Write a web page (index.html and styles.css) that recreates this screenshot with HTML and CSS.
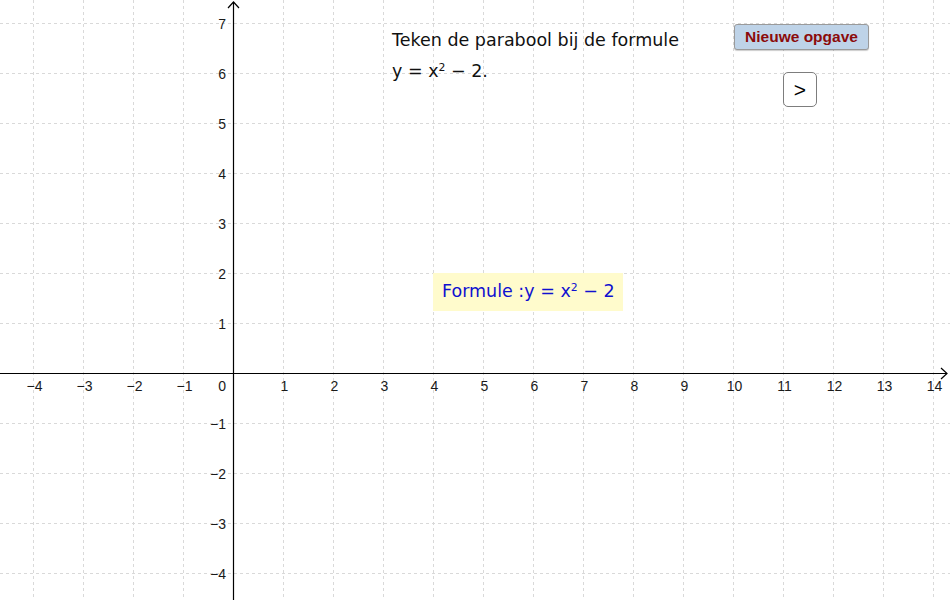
FILE: index.html
```html
<!DOCTYPE html>
<html lang="nl">
<head>
    <meta charset="UTF-8">
    <title>Parabool tekenen</title>
    <link rel="stylesheet" href="styles.css">
</head>
<body>
    <div class="applet">
        <svg class="graph" width="950" height="600" viewBox="0 0 950 600">
            <g id="grid" class="grid"></g>
            <g class="axes">
                <line x1="0" y1="373.5" x2="947" y2="373.5"/>
                <line x1="233.5" y1="2" x2="233.5" y2="600"/>
                <polyline points="941,368 947,373.5 941,379"/>
                <polyline points="228,8 233.5,2 239,8"/>
            </g>
            <g id="labels" class="labels"></g>
        </svg>

        <div class="opdracht">
            Teken de parabool bij de formule<br>
            y = x<sup>2</sup> &minus; 2.
        </div>

        <button class="nieuw">Nieuwe opgave</button>
        <button class="volgende">&gt;</button>

        <div class="formule">Formule :y = x<sup>2</sup> &minus; 2</div>
    </div>

    <script>
        // assenstelsel: oorsprong op (233.5, 373.5), 50px per eenheid
        const ox = 233.5, oy = 373.5, unit = 50;
        const ns = 'http://www.w3.org/2000/svg';
        const grid = document.getElementById('grid');
        const labels = document.getElementById('labels');

        const line = (x1, y1, x2, y2) => {
            const l = document.createElementNS(ns, 'line');
            l.setAttribute('x1', x1); l.setAttribute('y1', y1);
            l.setAttribute('x2', x2); l.setAttribute('y2', y2);
            grid.appendChild(l);
        };

        const label = (txt, x, y, anchor) => {
            const t = document.createElementNS(ns, 'text');
            t.setAttribute('x', x); t.setAttribute('y', y);
            t.setAttribute('text-anchor', anchor);
            t.textContent = txt;
            labels.appendChild(t);
        };

        for (let i = -4; i <= 14; i++) {
            const x = ox + i * unit;
            if (i !== 0) line(x, 0, x, 600);
            if (i < 0) label('\u2212' + (-i), x + 1, 391, 'middle');
            else if (i > 0) label(i, x + 1, 391, 'middle');
        }
        for (let j = -4; j <= 7; j++) {
            const y = oy - j * unit;
            if (j !== 0) {
                line(0, y, 950, y);
                label(j < 0 ? '\u2212' + (-j) : j, 226, y + 5, 'end');
            }
        }
        label('0', 226, 391, 'end');
    </script>
</body>
</html>
```

FILE: styles.css
```css
/* het hele applet */
body {
    margin: 0;
    background-color: #ffffff;
    overflow: hidden;
}

.applet {
    position: relative;
    width: 950px;
    height: 600px;
    font-family: 'Liberation Sans', Arial, sans-serif;
}

.graph {
    display: block;
}

.grid line {
    stroke: #d9d9d9;
    stroke-width: 1;
    stroke-dasharray: 3 3;
}

.axes line,
.axes polyline {
    stroke: #000000;
    stroke-width: 1.2;
    fill: none;
}

.labels text {
    font-family: 'Liberation Sans', Arial, sans-serif;
    font-size: 14px;
    fill: #1a1a1a;
}

/* opdrachttekst */
.opdracht {
    position: absolute;
    left: 392px;
    top: 25px;
    font-family: 'DejaVu Sans', sans-serif;
    font-size: 17.5px;
    line-height: 31px;
    color: #111111;
}

sup {
    font-size: 0.62em;
    line-height: 0;
    vertical-align: 0.6em;
}

/* knoppen */
button {
    position: absolute;
    font-family: 'Liberation Sans', Arial, sans-serif;
    cursor: pointer;
    padding: 0;
}

.nieuw {
    left: 734px;
    top: 24px;
    width: 135px;
    height: 26px;
    background-color: #bed3e8;
    border: 1px solid #9a9a9a;
    border-radius: 3px;
    color: #8b0b0b;
    font-size: 15.5px;
    font-weight: bold;
    box-shadow: 0 1px 1px rgba(0, 0, 0, 0.2);
}

.volgende {
    left: 783px;
    top: 72px;
    width: 34px;
    height: 35px;
    background-color: #ffffff;
    border: 1px solid #7d7d7d;
    border-radius: 5px;
    color: #000000;
    font-size: 21px;
}

/* formule-vak */
.formule {
    position: absolute;
    left: 433px;
    top: 273px;
    width: 190px;
    height: 38px;
    box-sizing: border-box;
    padding: 8px 0 0 9px;
    background-color: #fffbcc;
    color: #1010d0;
    font-family: 'DejaVu Sans', sans-serif;
    font-size: 17.5px;
    white-space: nowrap;
}
```
